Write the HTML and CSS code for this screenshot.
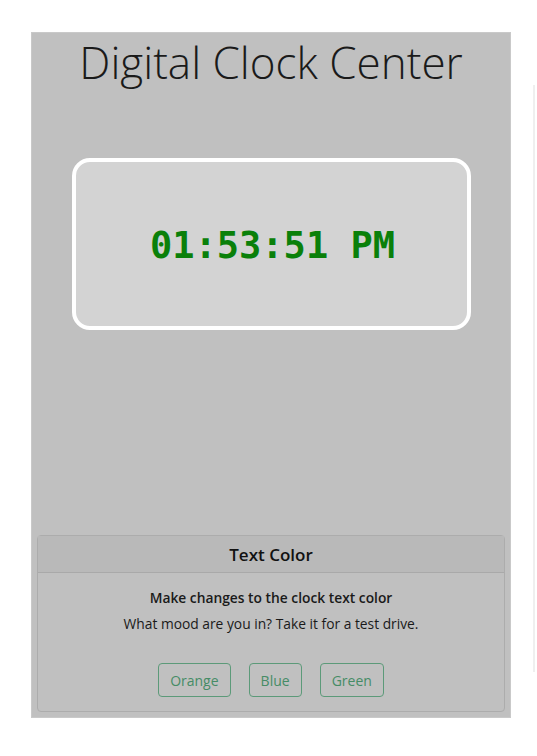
FILE: index.html
```html
<!DOCTYPE html>
<html lang="en">
<head>
<meta charset="utf-8">
<title>Digital Clock Center</title>
<link rel="stylesheet" href="styles.css">
</head>
<body>
<div class="page">
  <main class="app">
    <h1 class="title">Digital Clock Center</h1>
    <div class="clock-box">
      <span class="clock">01:53:51 PM</span>
    </div>
    <section class="card">
      <header class="card-header">Text Color</header>
      <div class="card-body">
        <p class="card-title">Make changes to the clock text color</p>
        <p class="card-text">What mood are you in? Take it for a test drive.</p>
        <div class="btn-row">
          <button class="btn">Orange</button>
          <button class="btn">Blue</button>
          <button class="btn">Green</button>
        </div>
      </div>
    </section>
  </main>
  <div class="track"></div>
</div>
</body>
</html>
```

FILE: styles.css
```css
* { box-sizing: border-box; }

html, body {
  margin: 0;
  padding: 0;
  background: #ffffff;
}

body {
  font-family: "Open Sans", "Noto Sans", sans-serif;
  color: #212529;
}

.page {
  display: flex;
  align-items: flex-start;
  padding: 32px 0 0 31px;
}

.app {
  width: 480px;
  height: 686px;
  background: #c0c0c0;
  border: 1px solid #c9c9c9;
  display: flex;
  flex-direction: column;
  align-items: center;
}

.title {
  margin: 0;
  padding-top: 2px;
  font-size: 44px;
  font-weight: 300;
  line-height: 54px;
  color: #1a1a1a;
  letter-spacing: 0;
}

.clock-box {
  margin-top: 69px;
  width: 399px;
  height: 172px;
  background: #d3d3d3;
  border: 4px solid #ffffff;
  border-radius: 18px;
  display: flex;
  align-items: center;
  justify-content: center;
}

.clock {
  font-family: "DejaVu Sans Mono", "Liberation Mono", monospace;
  font-weight: bold;
  font-size: 37px;
  color: #0a800a;
  padding-left: 3px;
  padding-top: 2px;
}

.card {
  margin-top: auto;
  margin-bottom: 5px;
  width: 468px;
  border: 1px solid #acacac;
  border-radius: 4px;
  background: #c0c0c0;
}

.card-header {
  height: 37px;
  display: flex;
  align-items: center;
  justify-content: center;
  background: #b9b9b9;
  border-bottom: 1px solid #a9a9a9;
  font-size: 17px;
  font-weight: 600;
  color: #111;
}

.card-body {
  display: flex;
  flex-direction: column;
  align-items: center;
  padding: 14px 16px 14px;
}

.card-title {
  margin: 0;
  font-size: 13.8px;
  font-weight: 600;
  line-height: 22px;
  color: #1a1a1a;
}

.card-text {
  margin: 4px 0 0;
  font-size: 13.8px;
  line-height: 22px;
  color: #1a1a1a;
}

.btn-row {
  margin-top: 28px;
  display: flex;
  gap: 18px;
}

.btn {
  height: 34px;
  padding: 0 11px;
  font-family: inherit;
  font-size: 14px;
  color: #468c66;
  background: transparent;
  border: 1px solid #5c9a79;
  border-radius: 4px;
}

.track {
  margin-left: 22px;
  margin-top: 53px;
  width: 2px;
  height: 587px;
  background: #efefef;
}
```
